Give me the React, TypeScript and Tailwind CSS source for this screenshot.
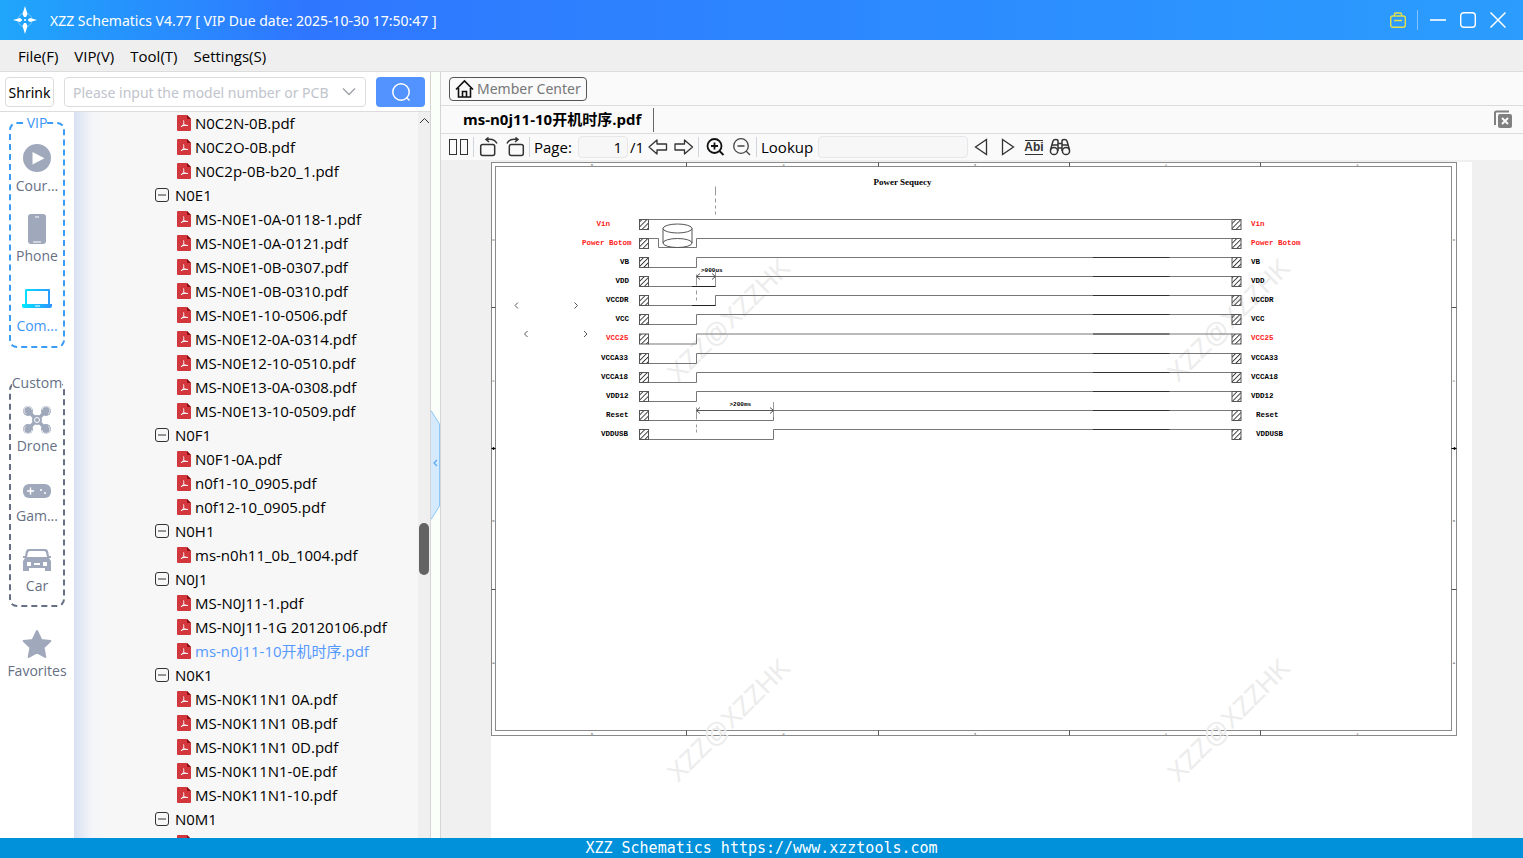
import type { ReactNode } from "react"

const tree = [
  { files: ["N0C2N-0B.pdf", "N0C2O-0B.pdf", "N0C2p-0B-b20_1.pdf"] },
  {
    name: "N0E1",
    files: [
      "MS-N0E1-0A-0118-1.pdf",
      "MS-N0E1-0A-0121.pdf",
      "MS-N0E1-0B-0307.pdf",
      "MS-N0E1-0B-0310.pdf",
      "MS-N0E1-10-0506.pdf",
      "MS-N0E12-0A-0314.pdf",
      "MS-N0E12-10-0510.pdf",
      "MS-N0E13-0A-0308.pdf",
      "MS-N0E13-10-0509.pdf",
    ],
  },
  { name: "N0F1", files: ["N0F1-0A.pdf", "n0f1-10_0905.pdf", "n0f12-10_0905.pdf"] },
  { name: "N0H1", files: ["ms-n0h11_0b_1004.pdf"] },
  { name: "N0J1", files: ["MS-N0J11-1.pdf", "MS-N0J11-1G 20120106.pdf", "ms-n0j11-10开机时序.pdf"] },
  {
    name: "N0K1",
    files: ["MS-N0K11N1 0A.pdf", "MS-N0K11N1 0B.pdf", "MS-N0K11N1 0D.pdf", "MS-N0K11N1-0E.pdf", "MS-N0K11N1-10.pdf"],
  },
  { name: "N0M1", files: [""] },
]

const openFile = "ms-n0j11-10开机时序.pdf"

// Sheet units are half pixels. rise = x where the signal goes high
const signals = [
  { name: "Vin", x: 211, rx: 1520, y: 115, red: true },
  { name: "Power Botom", x: 182, rx: 1520, y: 153, red: true },
  { name: "VB", x: 258, rx: 1520, y: 191, rise: 411 },
  { name: "VDD", x: 249, rx: 1520, y: 229, rise: 449 },
  { name: "VCCDR", x: 230, rx: 1520, y: 267, rise: 449 },
  { name: "VCC", x: 249, rx: 1520, y: 305, rise: 411 },
  { name: "VCC25", x: 230, rx: 1520, y: 344, rise: 411, red: true },
  { name: "VCCA33", x: 220, rx: 1520, y: 383, rise: 411 },
  { name: "VCCA18", x: 220, rx: 1520, y: 421, rise: 411 },
  { name: "VDD12", x: 230, rx: 1520, y: 459, rise: 411 },
  { name: "Reset", x: 230, rx: 1530, y: 497, rise: 565 },
  { name: "VDDUSB", x: 220, rx: 1530, y: 535, rise: 565 },
]

const columns = [
  { n: "5", x: 202 },
  { n: "4", x: 585 },
  { n: "3", x: 968 },
  { n: "2", x: 1350 },
  { n: "1", x: 1733 },
]

const rows = [
  { n: "D", y: 154 },
  { n: "C", y: 436 },
  { n: "B", y: 717 },
  { n: "A", y: 1000 },
]

function PdfIcon() {
  return (
    <svg className="w-[14px] h-4 shrink-0" viewBox="0 0 14 16">
      <path d="M1 0h9l4 4v11a1 1 0 0 1-1 1H1a1 1 0 0 1-1-1V1a1 1 0 0 1 1-1z" fill="#d2373e" />
      <path d="M10 0l4 4h-3a1 1 0 0 1-1-1z" fill="#8e0c14" />
      <path
        d="M6.500 5.500c.5 1.500.3 3-.2 4L4 12M6.500 9c1 1 2.500 1.500 4.500 1.500M4.500 11.300c1.500-.7 3.500-1.200 5-1"
        fill="none"
        stroke="#fff"
      />
    </svg>
  )
}

function SideItem({ label, active, children }: { label: string; active?: boolean; children: ReactNode }) {
  return (
    <button className="flex flex-col items-center w-full h-[70px]">
      <svg className="w-8 h-8" viewBox="0 0 32 32" fill="#a0a8bc">
        {children}
      </svg>
      <span className={active ? "leading-[22px] text-[#3d96f7]" : "leading-[22px] text-[#667085]"}>{label}</span>
    </button>
  )
}

function Sidebar() {
  return (
    <nav className="w-[74px] shrink-0 bg-white flex flex-col items-center text-[14px]">
      <fieldset className="w-14 h-[236px] rounded-lg border-2 border-dashed border-[#3a9cf5]">
        <legend className="mx-auto pt-px leading-5 text-[#3d96f7]">VIP</legend>
        <div className="pt-[10px]">
          <SideItem label="Cour...">
            <path fillRule="evenodd" d="M16 1a14 14 0 1 1 0 28 14 14 0 0 1 0-28zM11.500 9v12.500l12-6.200z" />
          </SideItem>
          <SideItem label="Phone">
            <rect x="7" y="1" width="18" height="30" rx="3" />
            <path d="M14 4h4M12 29h8" stroke="#fff" strokeWidth="1.200" />
          </SideItem>
          <SideItem label="Com..." active>
            <defs>
              <linearGradient id="laptop">
                <stop offset="0" stopColor="#00e8ff" />
                <stop offset="1" stopColor="#2f94ff" />
              </linearGradient>
            </defs>
            <path
              fill="url(#laptop)"
              fillRule="evenodd"
              d="M5 6h23a1 1 0 0 1 1 1v14h2v2a2 2 0 0 1-2 2H3a2 2 0 0 1-2-2v-2h3V7a1 1 0 0 1 1-1zM6 8v13h21V8z"
            />
            <path d="M14 23h5" stroke="#fff" />
          </SideItem>
        </div>
      </fieldset>

      <fieldset className="mt-6 w-14 h-[235px] rounded-lg border-2 border-dashed border-[#667085]">
        <legend className="mx-auto pt-px leading-5 text-[#667085] whitespace-nowrap">Custom</legend>
        <div className="pt-[10px]">
          <SideItem label="Drone">
            <path d="M8 9l16 16M24 9L8 25" stroke="#a0a8bc" strokeWidth="3.500" />
            <circle cx="16" cy="17" r="5" />
            <circle cx="16" cy="17" r="2.500" fill="none" stroke="#fff" />
            <circle cx="7" cy="8" r="5" />
            <circle cx="25" cy="8" r="5" />
            <circle cx="7" cy="26" r="5" />
            <circle cx="25" cy="26" r="5" />
            <g fill="none" stroke="#fff" strokeWidth=".7">
              <path d="M5 11a4 4 0 1 1 6-4M27 11a4 4 0 1 0-6-4M5 23a4 4 0 1 0 6 4M27 23a4 4 0 1 1-6 4" />
            </g>
          </SideItem>
          <SideItem label="Gam...">
            <rect x="2" y="11" width="28" height="14" rx="6" />
            <path d="M9.500 14.500v7M6 18h7" stroke="#fff" strokeWidth="1.500" />
            <circle cx="20" cy="17" r="1" fill="#fff" />
            <circle cx="24" cy="20" r="1" fill="#fff" />
          </SideItem>
          <SideItem label="Car">
            <path
              fillRule="evenodd"
              d="M8 6h16a3 3 0 0 1 3 2l1 5h2v2h-2l2 3v10h-6v-3H8v3H2V18l2-3H2v-2h2l1-5a3 3 0 0 1 3-2zM9 8a2 2 0 0 0-2 1.500L6 14h20l-1-4.500A2 2 0 0 0 23 8zM6 19v4h4v-4zm16 0v4h4v-4zM13 20v2h6v-2z"
            />
          </SideItem>
        </div>
      </fieldset>

      <div className="mt-[21px] w-full">
        <SideItem label="Favorites">
          <path
            d="M16 3l4.300 9 9 1-6.800 6.500L24.300 29 16 24.300 7.700 29l1.800-9.500L2.700 13l9-1z"
            stroke="#a0a8bc"
            strokeWidth="2"
            strokeLinejoin="round"
          />
        </SideItem>
      </div>
    </nav>
  )
}

function FileTree() {
  return (
    <div className="flex-1 min-w-0 overflow-hidden bg-linear-to-r from-[#d8e1f2] via-[#f3f5f8] via-[18px] to-[#f7f7f7] to-[30px]">
      <ul className="-mt-px">
        {tree.map((group, i) => (
          <li key={i}>
            {group.name && (
              <button className="flex items-center h-6 pl-[81px] gap-[6px]">
                <svg className="w-[14px] h-[14px]" viewBox="0 0 14 14" fill="none" stroke="#333">
                  <rect x=".5" y=".5" width="13" height="13" rx="2.500" />
                  <path d="M3 7h8" />
                </svg>
                {group.name}
              </button>
            )}
            <ul>
              {group.files.map((file) => (
                <li key={file}>
                  <a
                    href="#"
                    className={
                      file === openFile
                        ? "flex items-center h-6 pl-[103px] gap-1 whitespace-nowrap text-[#5599ff]"
                        : "flex items-center h-6 pl-[103px] gap-1 whitespace-nowrap"
                    }
                  >
                    <PdfIcon />
                    {file}
                  </a>
                </li>
              ))}
            </ul>
          </li>
        ))}
      </ul>
    </div>
  )
}

function Watermark({ x, y }: { x: number; y: number }) {
  return (
    <text
      x={x}
      y={y}
      transform={`rotate(-45 ${x} ${y})`}
      textAnchor="middle"
      dominantBaseline="central"
      fontSize="52"
      fill="#ececec"
      className="font-['Liberation_Sans',sans-serif]"
    >
      XZZ@XZZHK
    </text>
  )
}

function Sheet() {
  return (
    <svg className="block w-[981px] h-[676px] mx-auto bg-white shrink-0" viewBox="0 0 1962 1352">
      <defs>
        <pattern id="hatch" width="7" height="7" patternUnits="userSpaceOnUse" patternTransform="rotate(45)">
          <path d="M1 0v7" stroke="#222" strokeWidth="1.700" />
        </pattern>
      </defs>

      {/* Frame */}
      <g fill="none" stroke="#8a8a8a" strokeWidth="2">
        <rect x="1" y="1" width="1930" height="1146" />
        <rect x="9" y="9" width="1912" height="1128" />
        {[391, 775, 1157, 1539].map((x) => (
          <path key={x} d={`M${x} 1v8M${x} 1137v10`} stroke="#555" />
        ))}
        {[291, 855].map((y) => (
          <path key={y} d={`M1 ${y}h8M1921 ${y}h10`} stroke="#555" />
        ))}
      </g>
      <path d="M1 573h8M1921 573h10M4 571v4l4-2zM1928 571v4l-4-2z" stroke="#000" strokeWidth="2" />
      <g fontSize="8" fill="#666" textAnchor="middle" className="font-['Liberation_Mono',monospace]">
        {columns.map((c) => (
          <g key={c.n}>
            <text x={c.x} y="8">{c.n}</text>
            <text x={c.x} y="1145">{c.n}</text>
          </g>
        ))}
        {rows.map((r) => (
          <g key={r.n}>
            <text x="5" y={r.y + 3}>{r.n}</text>
            <text x="1926" y={r.y + 3}>{r.n}</text>
          </g>
        ))}
      </g>

      <Watermark x={475} y={316} />
      <Watermark x={1475} y={316} />
      <Watermark x={475} y={1116} />
      <Watermark x={1475} y={1116} />

      <text x="823" y="45" textAnchor="middle" fontSize="18" className="font-['Liberation_Serif',serif] font-bold">
        Power Sequecy
      </text>

      {/* Waveforms */}
      {signals.map((s) => (
        <g key={s.name} fill="none" stroke="#777" strokeWidth="2">
          {s.rise && <path d={`M315 ${s.y + 20}H${s.rise}V${s.y}H1482`} />}
          {s.y > 160 && <path d={`M1204 ${s.y}h153`} stroke="#333" />}
          <rect x="297" y={s.y} width="18" height="20" fill="url(#hatch)" stroke="#555" />
          <rect x="1482" y={s.y} width="18" height="20" fill="url(#hatch)" stroke="#555" />
          <g
            stroke="none"
            fill={s.red ? "#ff1a1a" : "#000"}
            fontSize="15"
            className="font-['Liberation_Mono',monospace] font-bold"
          >
            <text x={s.x} y={s.y + 12}>{s.name}</text>
            <text x={s.rx} y={s.y + 12}>{s.name}</text>
          </g>
        </g>
      ))}
      <g fill="none" stroke="#777" strokeWidth="2">
        <path d="M315 115H1482M315 153h20v18h76v-18H1482" />
        <path d="M449 49v18M449 73v8M449 87v6M449 99v6" stroke="#999" />
        <path d="M411 225v22M411 257v8M411 271v6M411 491v24M411 525v6M411 535v6M449 220v28M565 480v30" stroke="#999" />
        <path d="M411 229h38M418 223l-7 6 7 6M442 223l7 6-7 6" stroke="#555" />
        <path d="M411 497h154M418 491l-7 6 7 6M558 491l7 6-7 6" stroke="#555" />
        <path d="M402 249h47M402 287h47" stroke="#222" />
        <ellipse cx="373" cy="133" rx="29" ry="9" stroke="#555" />
        <ellipse cx="373" cy="162" rx="29" ry="9" stroke="#555" />
        <path d="M344 133v29M402 133v29" stroke="#555" />
        <path d="M54 281l-6 6 6 6M167 281l6 6-6 6M73 338l-6 6 6 6M186 338l6 6-6 6" stroke="#555" />
      </g>
      <g fontSize="12" className="font-['Liberation_Mono',monospace] font-bold">
        <text x="420" y="220">&gt;900us</text>
        <text x="477" y="488">&gt;200ms</text>
      </g>
    </svg>
  )
}

function Toolbar() {
  return (
    <div className="flex items-center h-[26px] pl-2 whitespace-nowrap">
      <button aria-label="Two pages">
        <svg className="w-5 h-5" viewBox="0 0 20 20" fill="none" stroke="#333">
          <rect x=".5" y="2.500" width="7" height="15" />
          <rect x="11.500" y="2.500" width="7" height="15" />
        </svg>
      </button>
      <span className="w-px h-5 mx-1 bg-gray-300" />
      <button aria-label="Rotate left" className="ml-px">
        <svg className="w-5 h-5" viewBox="0 0 20 20" fill="none" stroke="#333" strokeWidth="1.500">
          <rect x="1.700" y="7.500" width="14" height="11" rx="2" />
          <path d="M8 2.500c5-1 8.500 1 10 4M9.500.5L7 2.500l3 2.500" />
        </svg>
      </button>
      <button aria-label="Rotate right" className="ml-[6px]">
        <svg className="w-5 h-5" viewBox="0 0 20 20" fill="none" stroke="#333" strokeWidth="1.500">
          <rect x="4.300" y="7.500" width="14" height="11" rx="2" />
          <path d="M12 2.500c-5-1-8.500 1-10 4M10.500.5L13 2.500 10 5" />
        </svg>
      </button>
      <span className="w-px h-5 mx-1 bg-gray-300" />
      <label htmlFor="page" className="w-11">
        Page:
      </label>
      <input
        id="page"
        defaultValue="1"
        className="w-[50px] h-[22px] pr-[5px] text-right bg-[#f7f7f7] border border-gray-200 rounded-sm"
      />
      <span className="ml-[2px] w-[18px]">/1</span>
      <button aria-label="Previous page">
        <svg className="w-5 h-5" viewBox="0 0 20 20" fill="none" stroke="#333" strokeWidth="1.300">
          <path d="M1 10l8-7v4h9.500v6H9v4z" strokeLinejoin="round" />
        </svg>
      </button>
      <button aria-label="Next page" className="ml-[6px]">
        <svg className="w-5 h-5" viewBox="0 0 20 20" fill="none" stroke="#333" strokeWidth="1.300">
          <path d="M18.500 10l-8-7v4H1v6h9.500v4z" strokeLinejoin="round" />
        </svg>
      </button>
      <span className="w-px h-5 mx-1 bg-gray-300" />
      <button aria-label="Zoom in" className="ml-[3px]">
        <svg className="w-5 h-5" viewBox="0 0 20 20" fill="none" stroke="#111" strokeWidth="1.800">
          <circle cx="8.500" cy="9" r="7" />
          <path d="M13.500 14l4 4M5 9h7M8.500 5.500v7" />
        </svg>
      </button>
      <button aria-label="Zoom out" className="ml-[6px]">
        <svg className="w-5 h-5" viewBox="0 0 20 20" fill="none" stroke="#444" strokeWidth="1.300">
          <circle cx="9" cy="9" r="7.300" />
          <path d="M14 14l4 4M5.500 9h7" />
        </svg>
      </button>
      <span className="w-px h-5 mx-1 bg-gray-300" />
      <label htmlFor="lookup" className="w-[57px]">
        Lookup
      </label>
      <input id="lookup" className="w-[150px] h-[22px] px-1 bg-[#f7f7f7] border border-gray-200 rounded-sm" />
      <button aria-label="Find previous" className="ml-1">
        <svg className="w-5 h-5" viewBox="0 0 20 20" fill="none" stroke="#333" strokeWidth="1.300">
          <path d="M14.500 2.500v15L3.500 10z" />
        </svg>
      </button>
      <button aria-label="Find next" className="ml-[6px]">
        <svg className="w-5 h-5" viewBox="0 0 20 20" fill="none" stroke="#333" strokeWidth="1.300">
          <path d="M4.500 2.500v15L15.500 10z" />
        </svg>
      </button>
      <button className="ml-[7px] w-[18px] flex justify-center border-y border-[#333] text-[12px] leading-[13px] font-bold text-[#333] font-['Liberation_Sans',sans-serif]">
        Abi
      </button>
      <button aria-label="Search all" className="ml-[6px]">
        <svg className="w-[22px] h-5" viewBox="0 0 22 20" fill="none" stroke="#333" strokeWidth="1.500">
          <path d="M1.500 13L4 4c.5-2 5-2 5 0v10M20.500 13L18 4c-.5-2-5-2-5 0v10M9 6.500h4M9 11h4M3.500 8H9M13 8h5.500" />
          <circle cx="5" cy="14" r="3.600" />
          <circle cx="17" cy="14" r="3.600" />
        </svg>
      </button>
    </div>
  )
}

function TitleBar() {
  return (
    <header className="flex items-center h-10 shrink-0 pl-3 pr-[17px] text-white bg-linear-to-r from-[#1fa6fb] via-[#2f76ff] via-20% to-[#2b9dfe]">
      <svg className="w-[26px] h-7" viewBox="0 0 26 28" fill="#fff">
        <circle cx="13" cy="14" r="7" fill="none" stroke="#fff" strokeOpacity=".35" />
        <path d="M13 0l2.500 8-1.500 3h-2l-1.500-3zM13 28l2.500-8-1.500-3h-2l-1.500 3zM1 14l7-2 2 1.500v1L8 16zM25 14l-7-2-2 1.500v1l2 1.500z" />
        <circle cx="13" cy="14" r="1" />
      </svg>
      <h1 className="ml-3 flex-1 text-[14px] font-['Noto_Sans',sans-serif]">
        XZZ Schematics V4.77 [ VIP Due date: 2025-10-30 17:50:47 ]
      </h1>
      <button aria-label="Toolbox">
        <svg className="w-4 h-4" viewBox="0 0 16 16" fill="none" stroke="#e3e14a" strokeWidth="1.400">
          <rect x=".7" y="4" width="14.600" height="11.300" rx="2" />
          <path d="M4.500 4V2a1 1 0 0 1 1-1h5a1 1 0 0 1 1 1v2M4 8.500h8" />
        </svg>
      </button>
      <span className="w-px h-5 ml-[11px] mr-3 bg-white/40" />
      <button aria-label="Minimize">
        <svg className="w-4 h-4" viewBox="0 0 16 16" stroke="#fff" strokeWidth="1.600">
          <path d="M0 8h16" />
        </svg>
      </button>
      <button aria-label="Maximize" className="ml-[14px]">
        <svg className="w-4 h-4" viewBox="0 0 16 16" fill="none" stroke="#fff" strokeWidth="1.400">
          <rect x=".7" y=".7" width="14.600" height="14.600" rx="3" />
        </svg>
      </button>
      <button aria-label="Close" className="ml-[14px]">
        <svg className="w-4 h-4" viewBox="0 0 16 16" stroke="#fff" strokeWidth="1.500">
          <path d="M.5.5l15 15M15.500.5l-15 15" />
        </svg>
      </button>
    </header>
  )
}

export default function App() {
  return (
    <div className="flex flex-col h-screen overflow-hidden bg-white text-black text-[15px] font-['Open_Sans','Noto_Sans_CJK_SC',sans-serif]">
      <TitleBar />

      <nav className="flex items-center h-8 shrink-0 px-[18px] pt-px gap-4 bg-[#efefef] border-b border-[#dcdcdc]">
        <button>File(F)</button>
        <button>VIP(V)</button>
        <button>Tool(T)</button>
        <button>Settings(S)</button>
      </nav>

      <div className="flex flex-1 min-h-0">
        {/* Left panel */}
        <section className="flex flex-col w-[431px] shrink-0 border-r border-[#d5d5d5]">
          <div className="flex items-center h-10 shrink-0 pl-[5px] pr-[5px] border-b border-[#dcdcdc]">
            <button className="w-[49px] h-[30px] pt-px flex items-center justify-center border border-[#dcdcdc] rounded-sm text-[14px] font-['Noto_Sans',sans-serif]">
              Shrink
            </button>
            <div className="ml-[10px] flex-1 h-[30px] pt-px flex items-center pl-2 pr-2 border border-[#dcdcdc] rounded-sm">
              <input
                aria-label="Model number"
                placeholder="Please input the model number or PCB"
                className="flex-1 min-w-0 outline-none placeholder:text-[#c0c4cc] text-[14px] font-['Noto_Sans',sans-serif]"
              />
              <button aria-label="Show history">
                <svg className="w-4 h-4" viewBox="0 0 16 16" fill="none" stroke="#a0a4ac" strokeWidth="1.500">
                  <path d="M2 4.500l6 6 6-6" />
                </svg>
              </button>
            </div>
            <button
              aria-label="Search"
              className="ml-[10px] w-[49px] h-[30px] flex items-center justify-center bg-[#5393ff] rounded-sm"
            >
              <svg className="w-5 h-5" viewBox="0 0 20 20" fill="none" stroke="#fff" strokeWidth="1.500">
                <circle cx="10" cy="10" r="8.200" />
                <path d="M15.500 15.500l3 3" />
              </svg>
            </button>
          </div>
          <div className="flex flex-1 min-h-0">
            <Sidebar />
            <FileTree />
            <div className="relative w-3 shrink-0 bg-[#efefef]">
              <svg className="w-3 h-4" viewBox="0 0 12 16" fill="none" stroke="#333">
                <path d="M2 11l4.500-4.500L11 11" />
              </svg>
              <div className="absolute left-px top-[411px] w-[10px] h-[52px] rounded-full bg-[#636363]" />
            </div>
          </div>
        </section>

        {/* Collapse handle */}
        <div className="flex items-center w-[9px] pt-5 shrink-0 bg-[#fafff9]">
          <button aria-label="Collapse panel">
            <svg className="w-[9px] h-[110px]" viewBox="0 0 9 110" fill="none" stroke="#8cc6f8">
              <path d="M0 .5L8.500 14v82L0 109.500" fill="#d6eaff" />
              <path d="M6 50l-3 3 3 3" stroke="#5aa8f0" strokeWidth="1.200" />
            </svg>
          </button>
        </div>

        {/* Document viewer */}
        <main className="flex flex-col flex-1 min-w-0 border-l border-[#d5d5d5] bg-[#fafafa]">
          <div className="flex items-center h-[34px] shrink-0 pl-2 border-b border-[#dcdcdc]">
            <button className="flex items-center h-6 px-[5px] gap-[2px] border border-[#555] rounded-sm text-[#777] text-[14px] font-['Noto_Sans',sans-serif]">
              <svg className="w-5 h-5" viewBox="0 0 20 20" fill="none" stroke="#111" strokeWidth="1.600">
                <path d="M1 10.500l8.500-8.500 8.500 8.500M3.500 9v9h12V9M7.500 18v-5.500h4V18" />
              </svg>
              Member Center
            </button>
          </div>
          <div className="flex items-center h-7 shrink-0 pl-[22px] pr-[10px] border-b border-[#dcdcdc]">
            <button className="pr-3 h-6 border-r border-[#666] font-bold">{openFile}</button>
            <button aria-label="Close all tabs" className="ml-auto">
              <svg className="w-5 h-5" viewBox="0 0 20 20" fill="none">
                <path d="M2 15V3a1.500 1.500 0 0 1 1.500-1.500H16" stroke="#808080" strokeWidth="2" />
                <rect x="5" y="4" width="14" height="14" rx="2" fill="#808080" />
                <path d="M9 8l6 6M15 8l-6 6" stroke="#fff" strokeWidth="1.800" />
              </svg>
            </button>
          </div>
          <Toolbar />
          <div className="flex-1 min-h-0 overflow-hidden pt-[2px] pr-px bg-[#f0f0f0]">
            <Sheet />
          </div>
        </main>
      </div>

      <footer className="h-5 shrink-0 flex items-center justify-center pt-px bg-[#0091da] text-white text-[15px] font-['DejaVu_Sans_Mono',monospace]">
        XZZ Schematics https://www.xzztools.com
      </footer>
    </div>
  )
}
